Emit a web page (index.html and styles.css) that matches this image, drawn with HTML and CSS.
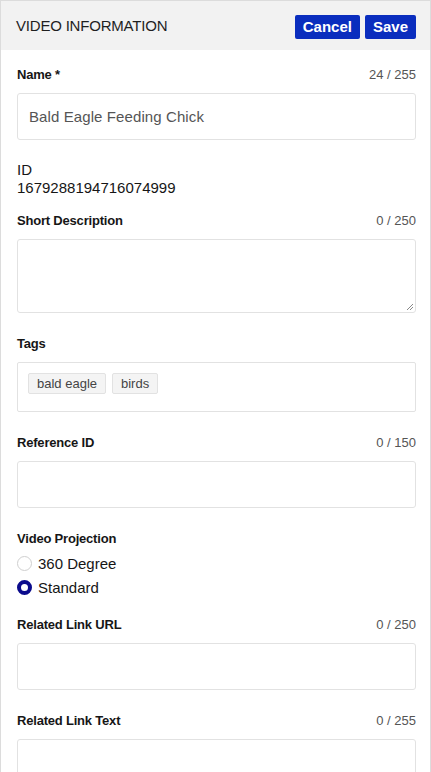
FILE: index.html
```html
<!DOCTYPE html>
<html>
<head>
<meta charset="utf-8">
<link rel="stylesheet" href="styles.css">
</head>
<body>
<div class="panel">
  <div class="header">
    <div class="title">VIDEO INFORMATION</div>
    <div class="actions">
      <button class="btn">Cancel</button>
      <button class="btn">Save</button>
    </div>
  </div>
  <div class="body">
    <div class="field">
      <div class="label-row"><span class="label">Name *</span><span class="count">24 / 255</span></div>
      <div class="input"><span class="value">Bald Eagle Feeding Chick</span></div>
    </div>
    <div class="id-block">
      <div class="id-label">ID</div>
      <div class="id-value">1679288194716074999</div>
    </div>
    <div class="field">
      <div class="label-row"><span class="label">Short Description</span><span class="count">0 / 250</span></div>
      <div class="textarea">
        <svg class="grip" width="8" height="8" viewBox="0 0 8 8"><path d="M7 1L1 7M7 4L4 7" stroke="#888" stroke-width="1" fill="none"/></svg>
      </div>
    </div>
    <div class="field">
      <div class="label-row"><span class="label">Tags</span></div>
      <div class="tags">
        <span class="tag">bald eagle</span>
        <span class="tag">birds</span>
      </div>
    </div>
    <div class="field">
      <div class="label-row"><span class="label">Reference ID</span><span class="count">0 / 150</span></div>
      <div class="input"></div>
    </div>
    <div class="field radios-field">
      <div class="label-row tight"><span class="label">Video Projection</span></div>
      <div class="radio"><span class="dot"></span><span>360 Degree</span></div>
      <div class="radio"><span class="dot on"></span><span>Standard</span></div>
    </div>
    <div class="field">
      <div class="label-row"><span class="label">Related Link URL</span><span class="count">0 / 250</span></div>
      <div class="input"></div>
    </div>
    <div class="field">
      <div class="label-row"><span class="label">Related Link Text</span><span class="count">0 / 255</span></div>
      <div class="input"></div>
    </div>
  </div>
</div>
</body>
</html>
```
FILE: styles.css
```css
html, body {
  margin: 0;
  padding: 0;
  background: #fff;
}
body {
  font-family: "Liberation Sans", Arial, sans-serif;
  color: #161616;
}
.panel {
  width: 431px;
  box-sizing: border-box;
  border: 1px solid #dcdcdc;
  min-height: 800px;
}
.header {
  height: 49px;
  background: #f2f2f2;
  display: flex;
  align-items: center;
  justify-content: space-between;
  padding: 0 14px 0 15px;
}
.title {
  font-size: 15px;
  color: #1f1f1f;
  letter-spacing: -0.2px;
}
.actions {
  display: flex;
  gap: 5px;
  padding-top: 2px;
}
.btn {
  font-family: inherit;
  background: #0a2dbe;
  color: #fff;
  border: none;
  border-radius: 2px;
  height: 24px;
  padding: 0 8px;
  font-size: 15px;
  font-weight: bold;
}
.body {
  padding: 15px 14px 0 16px;
}
.field {
  margin-bottom: 21px;
}
.label-row {
  display: flex;
  justify-content: space-between;
  align-items: center;
  height: 18px;
  margin-bottom: 10px;
}
.label-row.tight {
  margin-bottom: 4px;
}
.label {
  font-size: 13px;
  font-weight: bold;
  color: #161616;
  letter-spacing: -0.2px;
}
.count {
  font-size: 13px;
  color: #555;
}
.input {
  height: 47px;
  box-sizing: border-box;
  border: 1px solid #e2e2e2;
  border-radius: 3px;
  display: flex;
  align-items: center;
  padding: 0 11px;
}
.value {
  font-size: 15px;
  color: #555;
  letter-spacing: 0.1px;
}
.id-block {
  margin-bottom: 14px;
  font-size: 15px;
  line-height: 18px;
  color: #161616;
}
.textarea {
  height: 74px;
  box-sizing: border-box;
  border: 1px solid #e2e2e2;
  border-radius: 3px;
  position: relative;
}
.grip {
  position: absolute;
  right: 1px;
  bottom: 1px;
}
.tags {
  height: 50px;
  box-sizing: border-box;
  border: 1px solid #e2e2e2;
  border-radius: 2px;
  padding: 10px 10px;
  display: flex;
  align-items: flex-start;
  gap: 6px;
}
.tag {
  font-size: 13px;
  color: #444;
  background: #f4f4f4;
  border: 1px solid #e2e2e2;
  border-radius: 2px;
  height: 21px;
  box-sizing: border-box;
  padding: 0 8px;
  display: flex;
  align-items: center;
}
.radios-field {
  margin-bottom: 16px;
}
.radio {
  display: flex;
  align-items: center;
  height: 24px;
  font-size: 15px;
  color: #161616;
  gap: 6px;
}
.dot {
  width: 15px;
  height: 15px;
  box-sizing: border-box;
  border-radius: 50%;
  border: 1px solid #cfcfcf;
  background: #fff;
}
.dot.on {
  border: 4px solid #0b0b8c;
  background: #fff;
}
```
